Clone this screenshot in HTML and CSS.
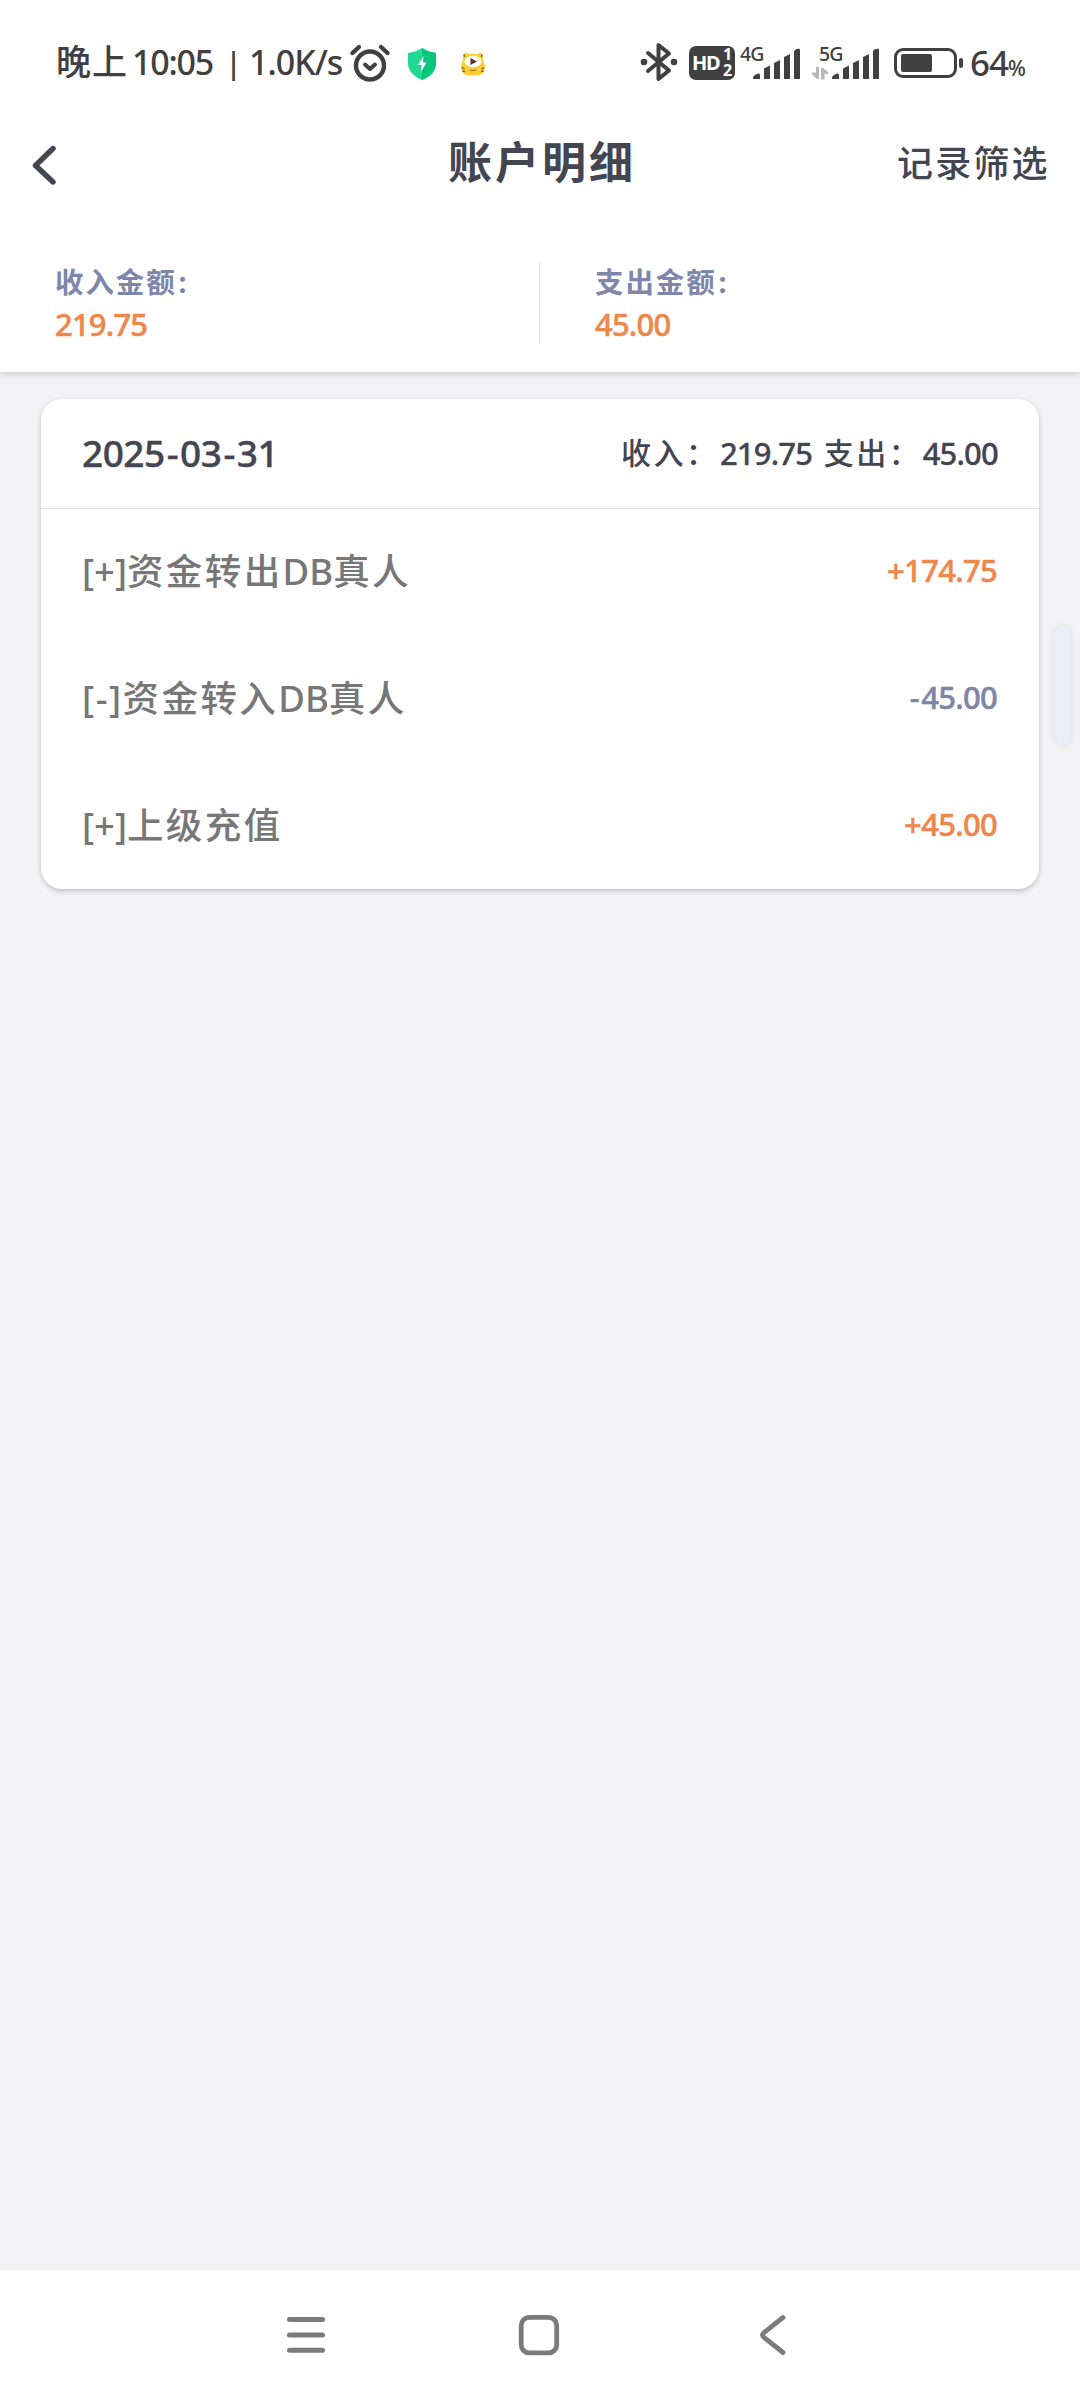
FILE: index.html
```html
<!DOCTYPE html>
<html lang="zh-CN">
<head>
<meta charset="utf-8">
<title>账户明细</title>
<link rel="stylesheet" href="styles.css">
</head>
<body>
<div class="screen">
  <header class="top">
    <div class="status">
      <div class="status-left">
        <span class="st-day">晚上</span><span class="st-time">10:05</span><span class="st-bar">|</span><span class="st-rate">1.0K/s</span>
        <svg class="alarm" width="42" height="42" viewBox="0 0 42 42" fill="none" stroke="#404040" stroke-linecap="round" stroke-linejoin="round"><circle cx="21" cy="23.5" r="14" stroke-width="4.4"/><path d="M16 22.500l5 4.500 5-4.500" stroke-width="4"/><path d="M3.500 11l6.500-6M38.500 11l-6.500-6" stroke-width="4.400"/></svg>
        <svg class="shield" width="28" height="32" viewBox="0 0 28 32"><path d="M14 0Q20 4 28 5V15Q28 26 14 32Q0 26 0 15V5Q8 4 14 0Z" fill="#21d894"/><path d="M14 0Q20 4 28 5V15Q28 26 14 32Z" fill="#08c77d"/><path d="M15.500 8L10 17H13.500L13 24L18.500 14.500H15Z" fill="#fff"/></svg>
        <svg class="tiger" width="24" height="24" viewBox="0 0 24 24"><path d="M2.500 3Q3 0 6 1.200L8 2H16L18 1.200Q21 0 21.500 3L22 8Q24 12 24 15.500Q23.500 23.500 15 23.500H9Q.5 23.500 0 15.500Q0 12 2 8Z" fill="#f8cf35"/><path d="M1 15.500l2.500 1.500M1.500 19l2.500 .5M23 15.500l-2.500 1.500M22.500 19l-2.500 .5M3 2.500l.5 2.500M21 2.500l-.5 2.500" stroke="#8a5a20" stroke-width="1.400"/><ellipse cx="12" cy="9.500" rx="8.500" ry="5.800" fill="#fff"/><path d="M9.500 6l6.500 3.500-6.500 3.500Z" fill="#682f20"/><path d="M8.500 18q3.500 1 7 0" stroke="#a8781c" stroke-width="1.200" fill="none"/></svg>
      </div>
      <div class="status-right">
        <svg class="bt" width="38" height="40" viewBox="0 0 38 40" fill="none" stroke="#404040" stroke-width="4" stroke-linejoin="round" stroke-linecap="round"><path d="M8 11L29 28.500 18.500 37V3L29 11.500 8 29"/><circle cx="4" cy="20" r="3.300" fill="#404040" stroke="none"/><circle cx="34" cy="20" r="3.300" fill="#404040" stroke="none"/></svg>
        <div class="hd"><span class="hd-main">HD</span><span class="hd-sims"><span>1</span><span>2</span></span></div>
        <div class="signal signal-a"><span class="net">4G</span><svg class="bars" width="48" height="32" viewBox="0 0 48 32" fill="#404040"><path d="M0 30Q0 28 2 27L5 25.500Q7 25 7 27V31H0ZM11 20.500L17 17.500V31H11ZM21 15L27 12V31H21ZM31 9L37 6V31H31ZM41 4Q41 2 43 1.300L45 .8Q47 .5 47 2V31H41Z"/></svg></div>
        <div class="signal signal-b"><span class="net">5G</span><svg class="arrows" width="17" height="13" viewBox="0 0 17 13" fill="#b8b8b8"><path d="M7 0V12H5L0 7.500V5.500H4V0ZM9 12.500V1H11L16 5V7H12.500V12.500Z"/></svg><svg class="bars" width="48" height="32" viewBox="0 0 48 32" fill="#404040"><path d="M0 30Q0 28 2 27L5 25.500Q7 25 7 27V31H0ZM11 20.500L17 17.500V31H11ZM21 15L27 12V31H21ZM31 9L37 6V31H31ZM41 4Q41 2 43 1.300L45 .8Q47 .5 47 2V31H41Z"/></svg></div>
        <svg class="battery" width="70" height="30" viewBox="0 0 70 30"><rect x="1.500" y="1.500" width="60" height="27" rx="7.500" fill="none" stroke="#404040" stroke-width="3"/><rect x="7" y="6" width="31" height="18" rx="2" fill="#404040"/><rect x="65" y="10" width="4" height="10" rx="2" fill="#404040"/></svg>
        <span class="pct">64</span><span class="pct-sign">%</span>
      </div>
    </div>
    <div class="titlebar">
      <svg class="back" width="26" height="42" viewBox="0 0 26 42" fill="none" stroke="#434551" stroke-width="5.4" stroke-linecap="round" stroke-linejoin="round"><path d="M22 5.500L4.500 22.500 22 39"/></svg>
      <h1 class="title">账户明细</h1>
      <span class="filter">记录筛选</span>
    </div>
    <div class="summary">
      <div class="sum-col"><div class="sum-label">收入金额<span class="colon">:</span></div><div class="sum-value">219.75</div></div>
      <div class="sum-col sum-out"><div class="sum-label">支出金额<span class="colon">:</span></div><div class="sum-value">45.00</div></div>
    </div>
  </header>
  <main class="content">
    <section class="card">
      <div class="card-head"><span class="date">2025<span class="dash">-</span>03<span class="dash">-</span>31</span><span class="totals"><span class="tot-label">收入：</span><span class="tot-in">219.75</span><span class="tot-label">支出：</span><span class="tot-out">45.00</span></span></div>
      <div class="row"><span class="desc"><span class="latin">[+]</span>资金转出<span class="latin">DB</span>真人</span><span class="amt">+174.75</span></div>
      <div class="row"><span class="desc"><span class="latin wide">[-]</span>资金转入<span class="latin">DB</span>真人</span><span class="amt minus"><span class="sign">-</span>45.00</span></div>
      <div class="row"><span class="desc"><span class="latin">[+]</span>上级充值</span><span class="amt">+45.00</span></div>
    </section>
    <div class="handle"></div>
  </main>
  <nav class="nav">
    <svg width="44" height="44" viewBox="0 0 44 44" fill="none" stroke="#7b7b7b" stroke-width="5" stroke-linecap="round"><path d="M4.500 6.500H37.500M4.500 22H37.500M4.500 37.300H37.500"/></svg>
    <svg width="44" height="44" viewBox="0 0 44 44" fill="none" stroke="#7b7b7b" stroke-width="4.800"><rect x="3.200" y="4.400" width="35.500" height="35.500" rx="8"/></svg>
    <svg width="44" height="44" viewBox="0 0 44 44" fill="none" stroke="#7b7b7b" stroke-width="4.800" stroke-linecap="round"><path d="M32 4.500L13 19.500Q10 22 13 24.500L32 39.500"/></svg>
  </nav>
</div>
</body>
</html>
```
FILE: styles.css
```css
* { box-sizing: border-box; }
body { margin: 0; background: #f3f3f5; font-family: "Noto Sans", "Noto Sans CJK SC", sans-serif; font-weight: 500; }
svg { display: block; flex: none; }
.screen { width: 1080px; height: 2400px; display: flex; flex-direction: column; overflow: hidden; }
.top { position: relative; z-index: 1; height: 372px; background: #fff; box-shadow: 0 1px 8px rgba(0,0,0,.2); display: flex; flex-direction: column; flex: none; }
.status { height: 124px; display: flex; justify-content: space-between; color: #404040; line-height: 40px; white-space: nowrap; }
.status-left { display: flex; padding: 42px 0 0 56px; font-size: 34px; }
.st-day { width: 76px; font-size: 35px; letter-spacing: 1px; }
.st-time { width: 93px; letter-spacing: -1.2px; }
.st-bar { width: 24px; font-size: 31px; }
.st-rate { width: 100px; letter-spacing: -1px; }
.shield { margin: 6px 0 0 17px; }
.tiger { margin: 10px 0 0 25px; }
.status-right { display: flex; padding: 43px 55px 0 0; }
.bt { margin: -1px 11px 0 -1px; }
.hd { width: 46px; height: 34px; margin-top: 3px; border-radius: 7px; background: #404040; color: #fff; display: flex; font-weight: 700; padding-left: 3px; }
.hd-main { font-size: 20px; line-height: 33px; width: 31px; letter-spacing: -1.2px; }
.hd-sims { display: flex; flex-direction: column; font-size: 16px; line-height: 16px; }
.signal { display: flex; align-items: flex-start; position: relative; }
.net { font-size: 19.5px; line-height: 22px; letter-spacing: -.8px; width: 28px; flex: none; }
.signal-a { width: 62px; margin-left: 4px; padding-left: 1px; }
.signal-b { width: 70px; margin: 0 13px 0 10px; padding-left: 8px; }
.bars { margin: 5px 0 0 -15px; }
.arrows { position: absolute; left: 1px; top: 24px; }
.battery { margin-top: 5px; }
.pct { font-size: 35px; width: 44px; padding-left: 6px; letter-spacing: -1px; }
.pct-sign { font-size: 21px; line-height: 51px; width: 17px; }
.titlebar { height: 80px; display: flex; align-items: center; padding: 0 30px 0 31px; color: #434551; }
.back { width: 26px; }
.title { margin: -4px 0 0 391px; width: 449px; font-size: 44px; letter-spacing: 3px; font-weight: 700; line-height: 60px; }
.filter { font-size: 36px; letter-spacing: 2.2px; margin-top: -5px; white-space: nowrap; }
.summary { display: flex; padding-top: 58px; }
.sum-col { width: 539px; height: 83px; padding-left: 55px; }
.sum-out { border-left: 1px solid #e3e4e8; padding-left: 55px; }
.sum-label { font-size: 28.5px; line-height: 41px; letter-spacing: 1.9px; color: #7e86a9; font-weight: 700; }
.colon { margin-left: 2px; }
.sum-value { font-size: 31px; line-height: 41px; color: #ed874b; letter-spacing: -.8px; margin-top: 1px; -webkit-text-stroke: .5px currentColor; }
.content { flex: 1; padding: 27px 41px 0; position: relative; background: #f3f3f5; z-index: 0; }
.card { height: 490px; border-radius: 21px; background: #fff; box-shadow: 0 2px 5px rgba(0,0,0,.22); }
.card-head { height: 110px; border-bottom: 1px solid #dfdfe1; display: flex; align-items: center; justify-content: space-between; padding: 0 41px 2px 41px; color: #434551; white-space: nowrap; }
.date { font-size: 37px; letter-spacing: -.5px; -webkit-text-stroke: .4px currentColor; }
.dash { margin: 0 2px; }
.totals { display: flex; font-size: 31px; width: 377px; letter-spacing: -.8px; }
.tot-label { font-size: 30px; letter-spacing: 2.5px; width: 99px; line-height: 42px; }
.tot-in { width: 104px; }
.tot-in, .tot-out { -webkit-text-stroke: .3px currentColor; }
.row { height: 127px; display: flex; align-items: center; justify-content: space-between; padding: 0 42px 6px 41px; }
.desc { font-size: 36.5px; letter-spacing: 2.4px; color: #777; }
.latin { letter-spacing: 0; }
.wide { letter-spacing: 1.6px; }
.amt { font-size: 31px; letter-spacing: -.7px; color: #ed874b; -webkit-text-stroke: .5px currentColor; }
.sign { margin-right: 2px; }
.minus { color: #7e86a5; }
.handle { position: absolute; left: 1055px; top: 255px; width: 15px; height: 117px; border-radius: 8px; background: #ecedf8; box-shadow: 0 0 5px 3px rgba(0,0,0,.05); }
.nav { height: 130px; background: #fff; display: flex; padding: 43px 0 0 285px; gap: 189px; flex: none; }
```
